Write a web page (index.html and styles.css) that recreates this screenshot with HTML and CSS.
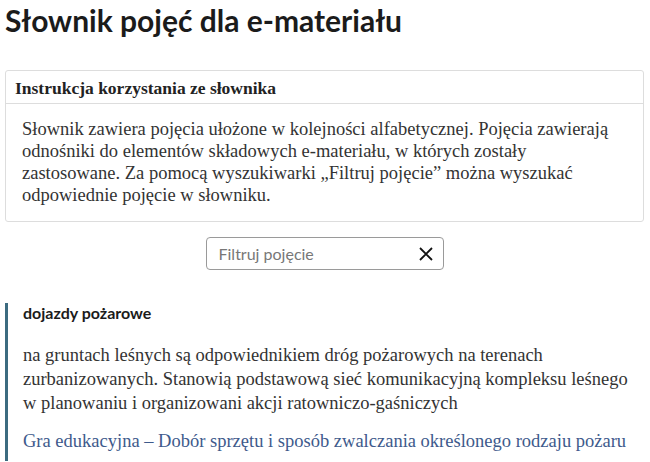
FILE: index.html
```html
<!DOCTYPE html>
<html lang="pl">
<head>
    <meta charset="UTF-8">
    <meta name="viewport" content="width=device-width, initial-scale=1.0">
    <title>Słownik pojęć dla e-materiału</title>

    <link rel="stylesheet" href="styles.css">
</head>

<body>
    <div class="page">
        <h1>Słownik pojęć dla e-materiału</h1>

        <div class="info">
            <div class="info_head">Instrukcja korzystania ze słownika</div>
            <div class="info_body">
                <p>Słownik zawiera pojęcia ułożone w kolejności alfabetycznej. Pojęcia zawierają odnośniki do elementów składowych e-materiału, w których zostały zastosowane. Za pomocą wyszukiwarki „Filtruj pojęcie” można wyszukać odpowiednie pojęcie w słowniku.</p>
            </div>
        </div>

        <div class="search">
            <div class="search_box">
                <input type="text" placeholder="Filtruj pojęcie">
                <button class="clear" aria-label="Wyczyść">
                    <svg width="14" height="14" viewBox="0 0 14 14">
                        <path d="M1 1 L13 13 M13 1 L1 13" stroke="#111" stroke-width="1.8" fill="none"/>
                    </svg>
                </button>
            </div>
        </div>

        <div class="entry">
            <h3>dojazdy pożarowe</h3>
            <p>na gruntach leśnych są odpowiednikiem dróg pożarowych na terenach zurbanizowanych. Stanowią podstawową sieć komunikacyjną kompleksu leśnego w planowaniu i organizowani akcji ratowniczo-gaśniczych</p>
            <a href="#">Gra edukacyjna – Dobór sprzętu i sposób zwalczania określonego rodzaju pożaru</a>
        </div>
    </div>
</body>
</html>
```

FILE: styles.css
```css
*{
    margin: 0;
    padding: 0;
    box-sizing: border-box;
}
body{
    background-color: #ffffff;
    font-family: "Liberation Serif", serif;
    color: #333333;
}
.page{
    padding: 0 6px 0 5px;
}

h1{
    font-family: Lato, sans-serif;
    font-size: 30px;
    font-weight: 700;
    color: #1b1b1b;
    line-height: 40px;
    margin-bottom: 30px;
}

.info{
    border: 1px solid #dddddd;
    border-radius: 3px;
}
.info_head{
    font-weight: 700;
    font-size: 17.5px;
    line-height: 20px;
    color: #222222;
    padding: 7px 9px 5px;
    border-bottom: 1px solid #dddddd;
}
.info_body{
    padding: 14px 16px 15px;
    font-size: 18.5px;
    line-height: 22px;
}

.search{
    display: flex;
    justify-content: center;
    margin: 15px 0 33px;
}
.search_box{
    width: 238px;
    height: 33px;
    border: 1px solid #9a9a9a;
    border-radius: 4px;
    display: flex;
    align-items: center;
    padding: 0 8px 0 12px;
}
.search_box input{
    flex: 1;
    border: none;
    outline: none;
    font-family: Lato, sans-serif;
    font-size: 16px;
    color: #333333;
    min-width: 0;
}
.search_box input::placeholder{
    color: #777777;
}
.clear{
    border: none;
    background: none;
    display: flex;
    padding: 0 2px;
}

.entry{
    border-left: 3px solid #3c6b80;
    padding: 0 14px 8px 15px;
}
.entry h3{
    font-family: Lato, sans-serif;
    font-size: 16px;
    font-weight: 700;
    color: #1b1b1b;
    line-height: 20px;
    margin-bottom: 20px;
}
.entry p{
    font-size: 18.5px;
    line-height: 24px;
    margin-bottom: 14px;
}
.entry a{
    font-size: 18.5px;
    line-height: 24px;
    color: #3e5a8c;
    text-decoration: none;
}
```
